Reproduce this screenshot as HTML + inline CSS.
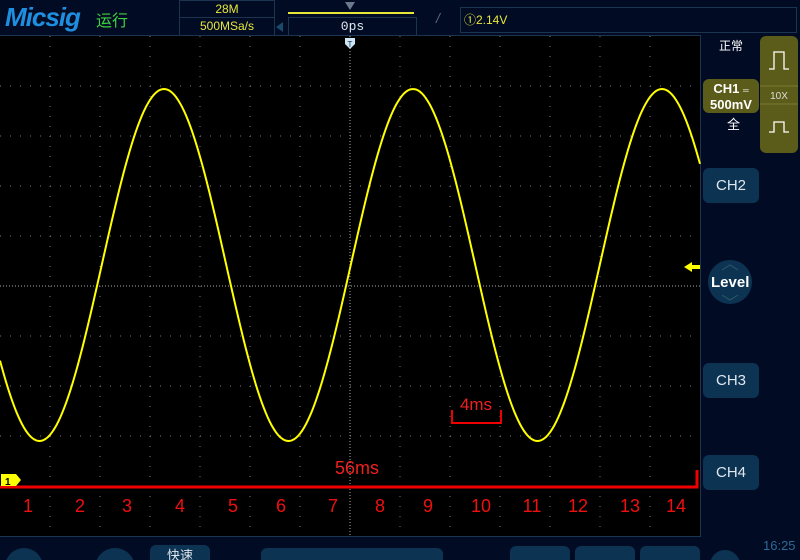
<!DOCTYPE html>
<html style="width:800px;height:560px;overflow:hidden"><head><meta charset="utf-8"><style>
body{margin:0;width:800px;height:560px;background:#020b24;overflow:hidden;position:relative;font-family:"Liberation Sans","Noto Sans CJK SC",sans-serif}
.a{position:absolute}
.btn{position:absolute;background:#0d3352;border-radius:6px;color:#dfe8f0;font-size:15px;text-align:center}
</style></head><body>
<div class="a" style="left:5px;top:2px;font:italic bold 26px 'Liberation Sans',sans-serif;color:#1e8fe0;letter-spacing:-1px">Micsig</div>
<div class="a" style="left:96px;top:7px;font-size:16px;color:#3fd23f">运行</div>
<div class="a" style="left:179px;top:0;width:94px;height:34px;border:1px solid #1b3550;color:#e7e73a;font-size:12px;text-align:center;line-height:16px"><div style="border-bottom:1px solid #1b3550">28M</div><div>500MSa/s</div></div>
<div class="a" style="left:288px;top:12px;width:126px;height:2px;background:#e7e73a"></div>
<div class="a" style="left:345px;top:2px;width:0;height:0;border-left:5px solid transparent;border-right:5px solid transparent;border-top:8px solid #6a7a8a"></div>
<div class="a" style="left:276px;top:22px;width:0;height:0;border-top:5px solid transparent;border-bottom:5px solid transparent;border-right:7px solid #1a4a6a"></div>
<div class="a" style="left:288px;top:17px;width:127px;height:17px;border:1px solid #1b3550;color:#dfe8f0;font:13px 'Liberation Mono',monospace;text-align:center;line-height:17px">0ps</div>
<div class="a" style="left:436px;top:10px;color:#667;font-size:14px;font-style:italic">/</div>
<div class="a" style="left:460px;top:7px;width:332px;height:24px;border:1px solid #1b3550;color:#e7e73a;font-size:12px;line-height:24px;padding-left:3px">①2.14V</div>
<div class="a" style="left:0;top:35px;width:700px;height:500px;background:#000;border:1px solid #1b3550;border-left:none"></div>
<svg class="a" style="left:0;top:0" width="800" height="560" id="s">
<g id="g" stroke="#777" stroke-width="1" stroke-dasharray="1 9"></g>
<line x1="350" y1="36" x2="350" y2="536" stroke="#aaa" stroke-dasharray="1 2"/>
<line x1="0" y1="286" x2="700" y2="286" stroke="#aaa" stroke-dasharray="1 2"/>
<path d="M345 38h10v6l-5 5l-5-5z" fill="#cfe6f5"/><text x="350" y="47" font-size="8" text-anchor="middle" fill="#0a2a4a" font-family="Liberation Sans">T</text>
<polyline id="w" fill="none" stroke="#ffff00" stroke-width="2"/>
<path d="M0 487H697V470" stroke="#ee0000" stroke-width="3" fill="none"/>
<path d="M452 410v13h49v-13" stroke="#ee0000" stroke-width="2" fill="none"/>
<text x="476" y="410" fill="#ee2020" font-size="17" text-anchor="middle" font-family="Liberation Sans">4ms</text>
<text x="357" y="474" fill="#ee2020" font-size="18" text-anchor="middle" font-family="Liberation Sans">56ms</text>
<path d="M1 474h15l5 6l-5 6h-15z" fill="#ffff00"/><text x="5" y="485" font-size="10" font-weight="bold" font-family="Liberation Sans">1</text>
<g fill="#ee1010" font-size="18" font-family="Liberation Sans" text-anchor="middle">
<text x="28" y="512">1</text><text x="80" y="512">2</text><text x="127" y="512">3</text><text x="180" y="512">4</text><text x="233" y="512">5</text><text x="281" y="512">6</text><text x="333" y="512">7</text><text x="380" y="512">8</text><text x="428" y="512">9</text><text x="481" y="512">10</text><text x="532" y="512">11</text><text x="578" y="512">12</text><text x="630" y="512">13</text><text x="676" y="512">14</text></g>
<path d="M684 267l8-5v3h8v4h-8v3z" fill="#ffff00"/>
<circle cx="730" cy="282" r="22" fill="#0d3352"/>
<path d="M722 270l8-5l8 5M722 295l8 5l8-5" stroke="#2a5a6a" fill="none"/>
</svg>
<div class="a" style="left:719px;top:37px;color:#fff;font-size:12px">正常</div>
<div class="a" style="left:727px;top:114px;color:#fff;font-size:13px">全</div>
<div class="btn" style="left:703px;top:79px;width:56px;height:34px;background:#5c5c1a;color:#fff;font-weight:bold;font-size:13px;line-height:14px;padding-top:3px;box-sizing:border-box">CH1 <span style="font-size:8px">═</span><br>500mV</div>
<div class="a" style="left:760px;top:36px;width:38px;height:117px;background:#5c5c1a;border-radius:6px"></div>
<svg class="a" style="left:760px;top:36px" width="38" height="117"><path d="M9 33h5V16h10v17h5M9 96h5V86h10v10h5" stroke="#fff" fill="none" stroke-width="1.3"/><line x1="0" y1="50" x2="38" y2="50" stroke="#7a7a30"/><line x1="0" y1="68" x2="38" y2="68" stroke="#7a7a30"/><text x="19" y="63" fill="#ddd" font-size="10" text-anchor="middle" font-family="Liberation Sans">10X</text></svg>
<div class="btn" style="left:703px;top:168px;width:56px;height:35px;line-height:35px">CH2</div>
<div class="a" style="left:711px;top:274px;color:#fff;font-weight:bold;font-size:15px">Level</div>
<div class="btn" style="left:703px;top:363px;width:56px;height:35px;line-height:35px">CH3</div>
<div class="btn" style="left:703px;top:455px;width:56px;height:35px;line-height:35px">CH4</div>
<div class="a" style="left:5px;top:548px;width:38px;height:38px;border-radius:50%;background:#0d3352"></div>
<div class="a" style="left:95px;top:548px;width:40px;height:40px;border-radius:50%;background:#0d3352"></div>
<div class="btn" style="left:150px;top:545px;width:60px;height:30px;font-size:13px;line-height:22px">快速</div>
<div class="btn" style="left:261px;top:548px;width:182px;height:30px"></div>
<div class="btn" style="left:510px;top:546px;width:60px;height:30px"></div>
<div class="btn" style="left:575px;top:546px;width:60px;height:30px"></div>
<div class="btn" style="left:640px;top:546px;width:60px;height:30px"></div>
<div class="a" style="left:710px;top:550px;width:30px;height:30px;border-radius:50%;background:#0d3352"></div>
<div class="a" style="left:763px;top:538px;color:#2b6a95;font-size:13px">16:25</div>
<script>
var g=document.getElementById('g'),h='';
for(var x=51;x<700;x+=50)if(x!=351)h+='<line x1="'+(x-1)+'" y1="36" x2="'+(x-1)+'" y2="536"/>';
for(var y=86;y<536;y+=50)if(y!=286)h+='<line x1="0" y1="'+y+'" x2="700" y2="'+y+'"/>';
g.innerHTML=h;
var p='';for(var x=0;x<=700;x+=2)p+=x+','+(265-176*Math.cos(2*Math.PI*(x-164)/249)).toFixed(1)+' ';
document.getElementById('w').setAttribute('points',p);
</script>
</body></html>
